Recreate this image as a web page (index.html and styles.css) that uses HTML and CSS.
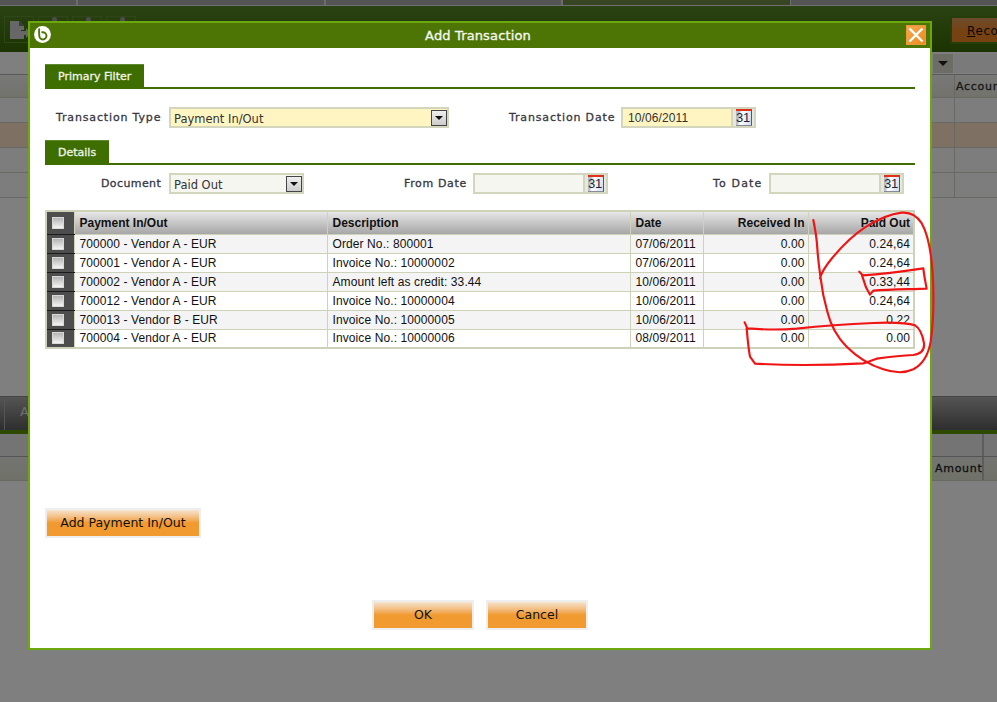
FILE: index.html
```html
<!DOCTYPE html>
<html lang="en">
<head>
<meta charset="utf-8">
<title>Add Transaction</title>
<link rel="stylesheet" href="styles.css">
</head>
<body>
<div class="page">
  <div class="top-tabs">
    <div class="top-tab tab-a"></div>
    <div class="top-tab tab-b"></div>
    <div class="top-tab tab-c"></div>
    <div class="top-tab tab-active"></div>
    <div class="top-tab tab-d"></div>
  </div>
  <div class="toolbar">
    <div class="tool"><svg width="22" height="20" viewBox="0 0 22 20"><path d="M1 1h9l5 5v4h-3v4h3v5H1z" fill="#cfcfcf"/><path d="M10 1v5h5z" fill="#777"/><path d="M12 11h5V8l5 5-5 5v-3h-5z" fill="#cfcfcf"/></svg></div>
    <div class="tool"><span class="tool-dot"></span></div>
    <div class="tool"><span class="tool-dot"></span></div>
    <div class="tool"><span class="tool-dot"></span></div>
    <div class="record"><u>R</u>ecord</div>
  </div>
  <div class="grid-filter">
    <div class="drop"><span class="drop-arrow"></span></div>
    <div class="cell-last"></div>
  </div>
  <div class="grid-row grid-head"><span class="account">Account</span></div>
  <div class="grid-row"><span class="col"></span></div>
  <div class="grid-row grid-selected"><span class="col"></span></div>
  <div class="grid-row"><span class="col"></span></div>
  <div class="grid-row grid-end"><span class="col"></span></div>
  <div class="lower-bar"><span class="lower-sep"></span><span class="lower-label">Add</span></div>
  <div class="lower-filter"><span class="lower-col"></span></div>
  <div class="lower-head"><span class="amount">Amount</span><span class="lower-col"></span></div>
</div>

<div class="overlay"></div>

<section class="modal">
  <header class="modal-title">
    <svg class="logo" width="17" height="17" viewBox="0 0 17 17"><circle cx="8.5" cy="8.5" r="8.4" fill="#fff"/><path d="M5.2 3.2C5 5.5 5.1 8 5.3 9.6A3.6 3.6 0 1 0 8.2 6.3" fill="none" stroke="#4d7506" stroke-width="1.9" stroke-linecap="round"/></svg>
    <h1>Add Transaction</h1>
    <button class="close" type="button" aria-label="Close"><svg width="18" height="18" viewBox="0 0 18 18"><path d="M2.5 2.5l13 13M15.5 2.5l-13 13" stroke="#fff" stroke-width="2.4"/></svg></button>
  </header>

  <div class="modal-body">
    <div class="section-head"><span class="section-tab">Primary Filter</span></div>
    <div class="form-row primary-row">
      <label class="lbl lbl-type">Transaction Type</label>
      <div class="field required type-select"><span class="field-text">Payment In/Out</span><span class="arrow-btn"></span></div>
      <label class="lbl lbl-trdate">Transaction Date</label>
      <div class="field required date-field"><span class="field-text date-text">10/06/2011</span><span class="cal"><span class="cal-page">31</span></span></div>
    </div>

    <div class="section-head"><span class="section-tab">Details</span></div>
    <div class="form-row details-row">
      <label class="lbl lbl-doc">Document</label>
      <div class="field doc-select"><span class="field-text">Paid Out</span><span class="arrow-btn"></span></div>
      <label class="lbl lbl-from">From Date</label>
      <div class="field date-field"><span class="field-text"></span><span class="cal"><span class="cal-page">31</span></span></div>
      <label class="lbl lbl-to">To Date</label>
      <div class="field date-field"><span class="field-text"></span><span class="cal"><span class="cal-page">31</span></span></div>
    </div>

    <table class="tx">
      <colgroup><col class="c-chk"><col class="c-pay"><col class="c-desc"><col class="c-date"><col class="c-in"><col class="c-out"></colgroup>
      <thead>
        <tr><th class="chk"><span class="box"></span></th><th>Payment In/Out</th><th>Description</th><th>Date</th><th class="num">Received In</th><th class="num">Paid Out</th></tr>
      </thead>
      <tbody>
        <tr><td class="chk"><span class="box"></span></td><td>700000 - Vendor A - EUR</td><td>Order No.: 800001</td><td>07/06/2011</td><td class="num">0.00</td><td class="num">0.24,64</td></tr>
        <tr><td class="chk"><span class="box"></span></td><td>700001 - Vendor A - EUR</td><td>Invoice No.: 10000002</td><td>07/06/2011</td><td class="num">0.00</td><td class="num">0.24,64</td></tr>
        <tr><td class="chk"><span class="box"></span></td><td>700002 - Vendor A - EUR</td><td>Amount left as credit: 33.44</td><td>10/06/2011</td><td class="num">0.00</td><td class="num">0.33,44</td></tr>
        <tr><td class="chk"><span class="box"></span></td><td>700012 - Vendor A - EUR</td><td>Invoice No.: 10000004</td><td>10/06/2011</td><td class="num">0.00</td><td class="num">0.24,64</td></tr>
        <tr><td class="chk"><span class="box"></span></td><td>700013 - Vendor B - EUR</td><td>Invoice No.: 10000005</td><td>10/06/2011</td><td class="num">0.00</td><td class="num">0.22</td></tr>
        <tr><td class="chk"><span class="box"></span></td><td>700004 - Vendor A - EUR</td><td>Invoice No.: 10000006</td><td>08/09/2011</td><td class="num">0.00</td><td class="num">0.00</td></tr>
      </tbody>
    </table>

    <div class="add-row"><button class="btn btn-add" type="button">Add Payment In/Out</button></div>
    <div class="actions">
      <button class="btn btn-main" type="button">OK</button>
      <button class="btn btn-main" type="button">Cancel</button>
    </div>
  </div>
</section>

<svg class="scribble" width="330" height="180" viewBox="0 0 990 540" fill="none" stroke="#f01414" stroke-width="6.5" stroke-linejoin="round" stroke-linecap="round">
  <path d="M580 60C586 90 590 110 592 145C594 180 598 205 602 235C606 270 612 300 622 335C632 375 655 415 680 440C710 470 750 495 790 508C820 518 850 522 880 508C905 495 925 465 932 425C940 370 942 290 938 220C934 160 925 105 905 70C890 45 870 36 845 38C810 42 770 60 735 82C700 105 665 140 640 170C622 192 606 210 600 235"/>
  <path d="M718 215L728 226C790 222 850 214 910 205C912 225 916 245 920 266C870 268 810 268 760 272L750 284L738 262L726 226"/>
  <path d="M374 367L382 385C430 389 480 390 530 386C600 378 680 372 760 369C810 367 860 368 885 376C900 385 908 405 912 430C914 450 905 462 880 465C840 467 800 472 770 476C755 482 745 487 730 490C620 496 510 497 405 491L390 470C385 445 383 420 380 385"/>
</svg>
</body>
</html>
```

FILE: styles.css
```css
* { box-sizing: border-box; }
html, body { margin: 0; padding: 0; height: 702px; overflow: hidden; background: #fff; }
body { position: relative; font-family: "Liberation Sans", Arial, sans-serif; }

/* Page behind the dialog */
.page { width: 997px; height: 702px; background: #fff; font-family: "DejaVu Sans", sans-serif; }
.top-tabs { display: flex; height: 6px; border-bottom: 1px solid #e0e0e0; }
.top-tab { height: 5px; background: #aaa; border-right: 2px solid #d8d8d8; }
.tab-a { width: 78px; }
.tab-b { width: 248px; }
.tab-c { width: 237px; }
.tab-active { width: 227px; background: #6e8a44; border-right: 0; }
.tab-d { flex: 1; border-right: 0; border-left: 1px solid #d8d8d8; }
.toolbar { display: flex; align-items: flex-start; height: 46px; padding: 10px 0 0 4px; gap: 4px; background: linear-gradient(#568624, #386802); }
.tool { width: 30px; height: 27px; border: 1px solid #5f8a34; display: flex; align-items: center; justify-content: center; padding-left: 2px; }
.tool-dot { width: 5px; height: 5px; margin-top: -21px; border-radius: 50%; background: #9a9a9a; }
.record { margin-left: auto; width: 47px; height: 28px; padding: 6px 0 0 15px; white-space: nowrap; overflow: hidden; border: 2px solid #4a7a12; border-right: 0; background: linear-gradient(#d99a5c, #ee8424 55%); font-size: 12px; letter-spacing: .6px; color: #111; }
.grid-filter { display: flex; justify-content: flex-end; height: 23px; background: #fff; border-bottom: 1px solid #b4b4b4; padding: 2px 0 1px; }
.drop { width: 20px; height: 19px; margin-right: 1px; background: #d9dccb; display: flex; align-items: center; justify-content: center; }
.drop-arrow { width: 0; height: 0; border: 5px solid transparent; border-top-color: #222; border-bottom: 0; }
.cell-last { width: 43px; background: #f4f4f4; }
.grid-row { display: flex; justify-content: flex-end; height: 25px; background: #fbfbfb; border-bottom: 1px solid #cfd2c4; }
.grid-head { height: 23px; background: linear-gradient(#f2f2f2, #e2e6d6); }
.grid-selected { background: #fde0c4; }
.col { width: 43px; border-left: 1px solid #cfd2c4; }
.account { display: block; width: 43px; padding: 5px 0 0 1px; overflow: hidden; border-left: 1px solid #cfd2c4; font-size: 11px; letter-spacing: .7px; -webkit-text-stroke: .3px #333; color: #333; white-space: nowrap; }
.lower-bar { display: flex; height: 38px; margin-top: 198px; border-top: 1px solid #8a8a8a; border-bottom: 4px solid #5a9400; background: linear-gradient(#aaa, #5c5c5c); }
.lower-sep { width: 5px; border-right: 1px solid #aaa; }
.lower-label { padding: 7px 0 0 15px; font-size: 13px; color: #ddd; }
.lower-filter { display: flex; justify-content: flex-end; height: 23px; background: #e9e9e9; border-bottom: 1px solid #aaa; }
.lower-head { display: flex; justify-content: flex-end; height: 24px; background: linear-gradient(#e8e9e2, #dfe4d3); border-bottom: 1px solid #cfd2c4; }
.lower-col { width: 15px; border-left: 2px solid #bbb; }
.amount { width: 47px; padding: 5px 0 0 0; font-size: 11px; letter-spacing: .7px; -webkit-text-stroke: .3px #222; color: #222; }

.overlay { position: absolute; inset: 0; background: rgba(0,0,0,.5); }

/* Dialog */
.modal { position: absolute; left: 28px; top: 21px; width: 904px; height: 629px; border: 2px solid #6ca70d; background: #fff; display: flex; flex-direction: column; }
.modal-title { flex: none; height: 25px; background: #4d7506; position: relative; display: flex; align-items: center; justify-content: center; }
.modal-title h1 { margin: -1px 0 0 -4px; font: 400 13px "DejaVu Sans", sans-serif; letter-spacing: .14px; -webkit-text-stroke: .35px #f4f7ec; color: #f4f7ec; }
.logo { position: absolute; left: 4px; top: 3px; }
.close { position: absolute; left: 876px; top: 2px; width: 20px; height: 20px; padding: 0; border: 1px solid #e59a3c; background: linear-gradient(135deg, #f4a94e, #ee8a1e); display: flex; align-items: center; justify-content: center; }
.modal-body { flex: 1; padding: 16px 15px 0; display: flex; flex-direction: column; }

.section-head { height: 25px; border-bottom: 2px solid #3f6e00; display: flex; }
.section-tab { height: 23px; padding: 5px 13px 0; background: #3f6e00; border-top: 1px solid #5f8a30; font: 400 11px "DejaVu Sans", sans-serif; letter-spacing: 0; -webkit-text-stroke: .3px #f2f5e8; color: #f2f5e8; }

.form-row { display: flex; align-items: center; }
.primary-row { height: 21px; margin: 18px 0 12px; }
.details-row { height: 21px; margin: 8px 0 16px; }
.lbl { font: 400 11px "DejaVu Sans", sans-serif; letter-spacing: .85px; -webkit-text-stroke: .3px #37383f; color: #37383f; white-space: nowrap; flex: none; margin-top: -1px; }
.lbl-type { width: 106px; margin-left: 11px; margin-right: 7px; }
.lbl-trdate { width: 105px; margin-left: 60px; margin-right: 7px; }
.lbl-doc { width: 60px; margin-left: 56px; margin-right: 8px; letter-spacing: .4px; }
.lbl-from { width: 62px; margin-left: 100px; margin-right: 7px; letter-spacing: .65px; }
.lbl-to { width: 49px; margin-left: 105px; margin-right: 7px; letter-spacing: 1.15px; }

.field { flex: none; height: 21px; display: flex; border: 2px solid #d3d6bd; background: #f4f6ef; }
.field.required { background: #fff5c2; }
.field-text { flex: 1; padding: 3px 0 0 3px; font: 11.5px "DejaVu Sans", sans-serif; color: #333; white-space: nowrap; }
.date-text { padding-left: 5px; padding-top: 2px; font: 12px "Liberation Sans", sans-serif; letter-spacing: .1px; }
.type-select { width: 280px; }
.doc-select { width: 135px; }
.date-field { width: 135px; }
.arrow-btn { width: 16px; height: 16px; margin: 1px 0 0; background: linear-gradient(#eee, #ccc); border: 1px solid #444; position: relative; flex: none; }
.arrow-btn::after { content: ""; position: absolute; left: 3px; top: 5px; border: 4px solid transparent; border-top-color: #111; border-bottom: 0; }
.cal { width: 25px; flex: none; background: #e5e8dd; border-left: 2px solid #d3d6bd; display: flex; align-items: center; justify-content: center; margin-right: -2px; border-right: 2px solid #d3d6bd; }
.cal-page { display: block; width: 16px; height: 17px; background: linear-gradient(100deg, #b9bdc4 20%, #fff 35%, #cfdcf0); border-top: 2px solid #e0301c; border-right: 1px solid #556; border-bottom: 1px solid #889; font: 13px/14px "Liberation Sans", sans-serif; color: #223; text-align: center; letter-spacing: -.3px; }

.tx { width: 870px; table-layout: fixed; border-collapse: collapse; border: 2px solid #ccd3b8; font-size: 12px; letter-spacing: .1px; color: #111; }
.c-chk { width: 28px; }
.c-pay { width: 253px; }
.c-desc { width: 303px; }
.c-date { width: 73px; }
.c-in { width: 105px; }
.c-out { width: 106px; }
.tx th { height: 23px; padding: 0 3px 0 5px; text-align: left; font-size: 12px; font-weight: 700; letter-spacing: 0; background: linear-gradient(#e6e6e6, #a6a6a6); border-left: 1px solid #ccd3b8; border-bottom: 1px solid #ccd3b8; }
.tx td { height: 19px; padding: 0 3px 0 5px; border-left: 1px solid #ccd3b8; border-bottom: 1px solid #ccd3b8; white-space: nowrap; overflow: hidden; }
.tx tbody tr:nth-child(odd) td { background: #f4f4f4; }
.tx tbody tr:nth-child(even) td { background: #fff; }
.tx .num { text-align: right; }
.tx .chk, .tx tbody tr td.chk { padding: 0 5px 0 0; background: #4d4d4d; border-bottom: 1px solid #1a1a1a; border-left: 0; text-align: center; line-height: 0; }
.box { display: inline-block; width: 12px; height: 12px; background: linear-gradient(#b4b4b4, #f4f4f4); border: 1px solid #d8d8d8; vertical-align: middle; }

.add-row { margin-top: 159px; }
.btn { display: block; height: 30px; padding: 0 0 2px; border: 2px solid #eee; background: linear-gradient(#f7e4cf, #f2b26a 35%, #f09a2f 50%); font: 12.5px "DejaVu Sans", sans-serif; color: #111; }
.btn-add { width: 156px; }
.actions { display: flex; justify-content: center; gap: 12px; margin-top: 62px; }
.btn-main { width: 102px; }

.scribble { position: absolute; left: 620px; top: 200px; }
```
